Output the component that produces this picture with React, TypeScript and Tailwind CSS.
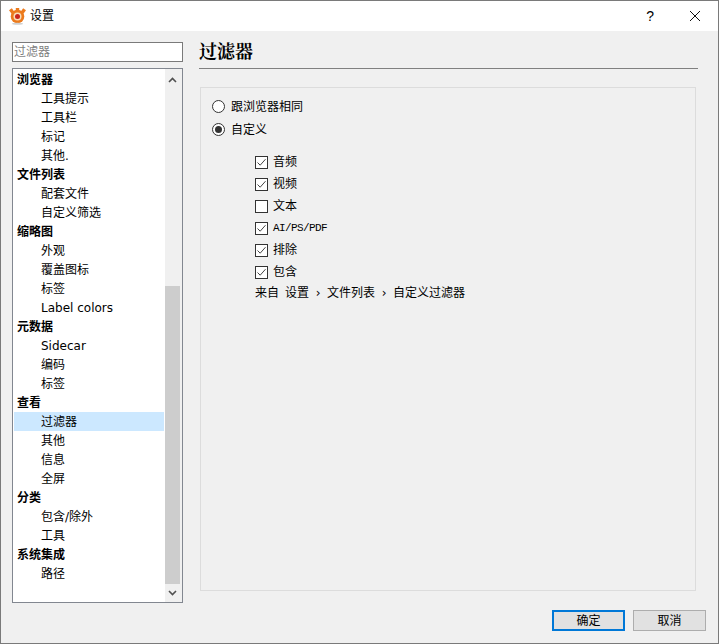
import React from "react";

const F = "font-['DejaVu_Sans','Noto_Sans_CJK_SC',sans-serif]";

const rows: [string, boolean][] = [
  ["浏览器", true], ["工具提示", false], ["工具栏", false], ["标记", false], ["其他.", false],
  ["文件列表", true], ["配套文件", false], ["自定义筛选", false],
  ["缩略图", true], ["外观", false], ["覆盖图标", false], ["标签", false], ["Label colors", false],
  ["元数据", true], ["Sidecar", false], ["编码", false], ["标签", false],
  ["查看", true], ["过滤器", false], ["其他", false], ["信息", false], ["全屏", false],
  ["分类", true], ["包含/除外", false], ["工具", false],
  ["系统集成", true], ["路径", false],
];

function Logo() {
  return (
    <svg width="17" height="17" viewBox="0 0 17 17" className="shrink-0">
      <g fill="#ec7a1c">
        <circle cx="8.5" cy="8.5" r="6.8" />
        <rect x="1" y="0.8" width="3.4" height="4.4" transform="rotate(-35 2.7 3)" />
        <rect x="12.6" y="0.8" width="3.4" height="4.4" transform="rotate(35 14.3 3)" />
        <rect x="6.8" y="0" width="3.4" height="3" />
      </g>
      <circle cx="8.5" cy="8.5" r="4" fill="#f8dcb8" />
      <circle cx="8.5" cy="8.5" r="2.5" fill="#c9261c" />
      <ellipse cx="8.5" cy="15.8" rx="5.5" ry="1" fill="#d0d0d0" />
    </svg>
  );
}

function Check({ on, label, mono }: { on: boolean; label: string; mono?: boolean }) {
  return (
    <div className="flex h-[22px] items-center">
      <div className="flex h-[13px] w-[13px] items-center justify-center border border-[#333333] bg-white">
        {on && (
          <svg width="11" height="11" viewBox="0 0 11 11">
            <path d="M1.5 5.5 L4.2 8.2 L9.5 2.2" fill="none" stroke="#444444" strokeWidth="1" />
          </svg>
        )}
      </div>
      <span className={mono ? "ml-[5px] font-['Liberation_Mono',monospace] text-[11px] tracking-[-0.6px] text-black" : "ml-[5px] text-xs text-black"}>
        {label}
      </span>
    </div>
  );
}

function Radio({ on, label }: { on: boolean; label: string }) {
  return (
    <div className="flex h-[23px] items-center">
      <div className="flex h-[13px] w-[13px] items-center justify-center rounded-full border border-[#333333] bg-white">
        {on && <div className="h-[7px] w-[7px] rounded-full bg-[#333333]" />}
      </div>
      <span className="ml-[6px] text-xs text-black">{label}</span>
    </div>
  );
}

export default function App() {
  return (
    <div className={`flex h-[644px] w-[719px] flex-col overflow-hidden border border-[#7a7a7a] bg-[#f0f0f0] ${F}`}>
      <div className="flex h-[30px] shrink-0 items-center bg-white pl-2">
        <Logo />
        <span className="ml-[4px] text-xs text-black">设置</span>
        <span className="ml-auto font-['Liberation_Sans',sans-serif] text-sm text-black">?</span>
        <svg width="12" height="12" viewBox="0 0 12 12" className="ml-[35px] mr-[17px]">
          <path d="M1 1 L11 11 M11 1 L1 11" stroke="#111111" strokeWidth="1" fill="none" />
        </svg>
      </div>

      <div className="flex min-h-0 flex-1 pl-[11px] pr-5 pt-[11px]">
        <div className="flex w-[171px] shrink-0 flex-col">
          <div className="flex h-5 items-center border border-[#7a7a7a] bg-white pl-px text-xs text-[#7f7f7f]">过滤器</div>
          <div className="mt-1.5 flex h-[535px] border border-[#828790] bg-white">
            <div className="w-[152px] shrink-0 pl-px pr-px pt-px">
              {rows.map(([t, head], i) => (
                <div
                  key={i}
                  className={`flex h-[19px] items-center text-xs text-black ${head ? "pl-[3px] font-bold" : "pl-[27px]"} ${t === "过滤器" ? "bg-[#cce8ff]" : ""}`}
                >
                  {t}
                </div>
              ))}
            </div>
            <div className="flex flex-1 flex-col items-start bg-[#f0f0f0]">
              <div className="flex h-[21px] w-[15px] shrink-0 items-center justify-center">
                <svg width="9" height="6" viewBox="0 0 9 6">
                  <path d="M1 5 L4.5 1.5 L8 5" fill="none" stroke="#505050" strokeWidth="1.6" />
                </svg>
              </div>
              <div className="mt-[196px] h-[298px] w-[15px] shrink-0 bg-[#cdcdcd]" />
              <div className="flex h-[17px] w-[15px] shrink-0 items-center justify-center">
                <svg width="9" height="6" viewBox="0 0 9 6">
                  <path d="M1 1 L4.5 4.5 L8 1" fill="none" stroke="#505050" strokeWidth="1.6" />
                </svg>
              </div>
            </div>
          </div>
        </div>

        <div className="ml-[16px] flex min-w-0 flex-1 flex-col">
          <div className="flex h-[27px] shrink-0 items-start border-b border-[#808080]">
            <span className="-mt-[2px] font-['Noto_Serif_CJK_SC','Noto_Sans_CJK_SC',serif] text-lg font-bold leading-[20px] text-black">过滤器</span>
          </div>
          <div className="ml-px mr-[2px] mt-[18px] h-[504px] border border-[#dcdcdc] pl-[11px] pt-[7px]">
            <Radio on={false} label="跟浏览器相同" />
            <Radio on label="自定义" />
            <div className="mt-[10px] pl-[43px]">
              <Check on label="音频" />
              <Check on label="视频" />
              <Check on={false} label="文本" />
              <Check on mono label="AI/PS/PDF" />
              <Check on label="排除" />
              <Check on label="包含" />
              <div className="flex text-xs leading-[20px] text-black">
                <span>来自</span>
                <span className="ml-[6px]">设置</span>
                <span className="w-[18px] text-center">›</span>
                <span>文件列表</span>
                <span className="w-[18px] text-center">›</span>
                <span>自定义过滤器</span>
              </div>
            </div>
          </div>
          <div className="-mr-[8px] mt-[19px] flex justify-end gap-2">
            <button className="h-[21px] w-[73px] border-2 border-[#0078d7] bg-[#e1e1e1] text-xs text-black">确定</button>
            <button className="h-[21px] w-[73px] border border-[#adadad] bg-[#e1e1e1] text-xs text-black">取消</button>
          </div>
        </div>
      </div>
    </div>
  );
}
